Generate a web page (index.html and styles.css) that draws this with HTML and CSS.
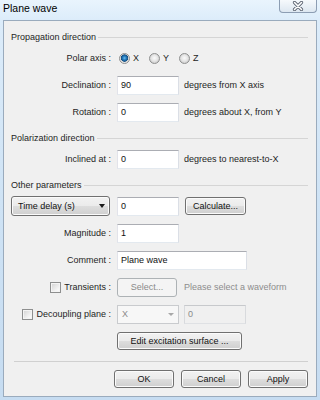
FILE: index.html
```html
<!DOCTYPE html>
<html>
<head>
<meta charset="utf-8">
<title>Plane wave</title>
<link rel="stylesheet" href="styles.css">
</head>
<body>
<div class="window">
  <div class="titlebar">
    <span class="title">Plane wave</span>
    <div class="close">
      <svg width="12" height="10" viewBox="0 0 12 10">
        <path d="M2.5 1.5 L9.5 8.5 M9.5 1.5 L2.5 8.5" stroke="#5a6270" stroke-width="3.2" stroke-linecap="round"/>
        <path d="M2.5 1.5 L9.5 8.5 M9.5 1.5 L2.5 8.5" stroke="#ffffff" stroke-width="1.6" stroke-linecap="round"/>
      </svg>
    </div>
  </div>
  <div class="client">
    <div class="group-title"><span>Propagation direction</span></div>
    <div class="row">
      <span class="lbl">Polar axis :</span>
      <div class="radios">
        <span class="radio-item"><span class="radio checked"></span>X</span>
        <span class="radio-item"><span class="radio"></span>Y</span>
        <span class="radio-item"><span class="radio"></span>Z</span>
      </div>
    </div>
    <div class="row">
      <span class="lbl">Declination :</span>
      <span class="input w62">90</span>
      <span class="suffix">degrees from X axis</span>
    </div>
    <div class="row">
      <span class="lbl">Rotation :</span>
      <span class="input w62">0</span>
      <span class="suffix">degrees about X, from Y</span>
    </div>

    <div class="group-title"><span>Polarization direction</span></div>
    <div class="row">
      <span class="lbl">Inclined at :</span>
      <span class="input w62">0</span>
      <span class="suffix">degrees to nearest-to-X</span>
    </div>

    <div class="group-title"><span>Other parameters</span></div>
    <div class="row">
      <span class="lbl lbl-left">
        <span class="combo">Time delay (s)<span class="arrow"></span></span>
      </span>
      <span class="input w62">0</span>
      <span class="btn btn-calc">Calculate...</span>
    </div>
    <div class="row">
      <span class="lbl">Magnitude :</span>
      <span class="input w62">1</span>
    </div>
    <div class="row">
      <span class="lbl">Comment :</span>
      <span class="input w130">Plane wave</span>
    </div>
    <div class="row">
      <span class="lbl"><span class="check"></span>Transients :</span>
      <span class="btn disabled btn-select">Select...</span>
      <span class="suffix muted">Please select a waveform</span>
    </div>
    <div class="row">
      <span class="lbl"><span class="check"></span>Decoupling plane :</span>
      <span class="dcombo">X<span class="darrow"></span></span>
      <span class="input disabled w62 gap5">0</span>
    </div>
    <div class="row">
      <span class="lbl"></span>
      <span class="btn btn-edit">Edit excitation surface ...</span>
    </div>

    <div class="sep"></div>
    <div class="buttons">
      <span class="btn">OK</span>
      <span class="btn">Cancel</span>
      <span class="btn">Apply</span>
    </div>
  </div>
</div>
</body>
</html>
```

FILE: styles.css
```css
* { box-sizing: border-box; }
html, body { margin: 0; padding: 0; }
body {
  width: 320px;
  height: 400px;
  overflow: hidden;
  font-family: "Liberation Sans", Arial, sans-serif;
  font-size: 9px;
  color: #1e1e1e;
}
.window {
  width: 320px;
  height: 400px;
  display: flex;
  flex-direction: column;
  background: linear-gradient(180deg, #e9f4fd 0px, #dcecfa 20px, #cfe3f5 200px, #c6dcf1 400px);
}
.titlebar {
  height: 20px;
  display: flex;
  align-items: flex-start;
  padding-left: 3px;
}
.title {
  font-size: 10.5px;
  line-height: 17px;
  color: #000;
}
.close {
  margin-left: auto;
  margin-right: 3px;
  width: 38px;
  height: 13px;
  border: 1px solid #8c9db3;
  border-top: none;
  border-radius: 0 0 4px 4px;
  background: linear-gradient(180deg, #f6f9fc, #dde7f1);
  display: flex;
  align-items: center;
  justify-content: center;
}
.close svg { display: block; }
.client {
  flex: 1;
  margin: 0 3px 3px 3px;
  border: 1px solid #9aabbd;
  background: #f0f0f0;
  padding: 9px 8px 0 7px;
  display: flex;
  flex-direction: column;
}
.group-title {
  height: 14px;
  display: flex;
  align-items: center;
  gap: 2px;
  white-space: nowrap;
}
.group-title::after {
  content: "";
  flex: 1;
  height: 1px;
  background: #d5d5d5;
}
.row + .group-title { margin-top: 9px; }
.row {
  height: 20px;
  display: flex;
  align-items: center;
  margin-top: 7px;
  white-space: nowrap;
}
.group-title + .row { margin-top: 4px; }
.lbl {
  width: 102px;
  flex-shrink: 0;
  margin-right: 4px;
  display: flex;
  align-items: center;
  justify-content: flex-end;
  gap: 3px;
  padding-right: 2px;
}
.lbl-left { justify-content: flex-start; padding-right: 0; }
.radios {
  display: flex;
  margin-left: 2px;
}
.radio-item {
  width: 30px;
  display: flex;
  align-items: center;
  gap: 3px;
}
.radio {
  width: 11px;
  height: 11px;
  border-radius: 50%;
  border: 1px solid #8e8f8f;
  background: radial-gradient(circle at 50% 45%, #fbfbfb 0, #e6e6e6 3px, #cfcfcf 5px);
}
.radio.checked {
  background: radial-gradient(circle at 50% 45%, #6fc0f0 0, #2a83c6 1.6px, #124e82 3.4px, #d6d6d6 3.9px, #ededed 5px);
}
.check {
  width: 11px;
  height: 11px;
  border: 1px solid #8e8f8f;
  background: linear-gradient(135deg, #d2d2d2 0%, #f4f4f4 70%, #ffffff 100%);
  box-shadow: inset 0 0 0 1px #f4f4f4;
}
.input {
  height: 19px;
  border: 1px solid;
  border-color: #abadb3 #dbdfe6 #e3e9ef #e2e3ea;
  background: #fff;
  padding-left: 3px;
  display: flex;
  align-items: center;
  color: #111;
}
.input.disabled {
  background: #f0f0f0;
  border-color: #c7c9cc #d8dadd #dfe1e4 #d8dadd;
  color: #8a8a8a;
}
.w62 { width: 62px; }
.w130 { width: 130px; }
.gap5 { margin-left: 5px; }
.suffix { margin-left: 5px; }
.muted { color: #8d8d8d; margin-left: 7px; }
.btn {
  height: 18px;
  display: flex;
  align-items: center;
  justify-content: center;
  border: 1px solid #707070;
  border-radius: 3px;
  background: linear-gradient(180deg, #f2f2f2 0%, #ebebeb 48%, #dddddd 52%, #cfcfcf 100%);
  box-shadow: inset 0 0 0 1px #fbfbfb;
  color: #111;
}
.btn.disabled {
  border-color: #adb2b5;
  background: #f4f4f4;
  box-shadow: none;
  color: #8a8a8a;
  height: 19px;
}
.btn-calc { width: 61px; margin-left: 6px; }
.btn-select { width: 60px; }
.btn-edit { width: 125px; margin-left: 0; }
.combo {
  width: 99px;
  height: 20px;
  border: 1px solid #707070;
  border-radius: 3px;
  background: linear-gradient(180deg, #f2f2f2 0%, #ebebeb 48%, #dddddd 52%, #cfcfcf 100%);
  box-shadow: inset 0 0 0 1px #fbfbfb;
  display: flex;
  align-items: center;
  padding-left: 6px;
  color: #111;
  position: relative;
}
.arrow {
  margin-left: auto;
  margin-right: 4px;
  width: 0;
  height: 0;
  border-left: 3.5px solid transparent;
  border-right: 3.5px solid transparent;
  border-top: 4px solid #1a1a1a;
}
.dcombo {
  width: 62px;
  height: 19px;
  border: 1px solid #c9cbce;
  background: #f7f7f7;
  display: flex;
  align-items: center;
  padding-left: 4px;
  color: #8a8a8a;
}
.darrow {
  margin-left: auto;
  margin-right: 4px;
  width: 0;
  height: 0;
  border-left: 3px solid transparent;
  border-right: 3px solid transparent;
  border-top: 3.5px solid #a8a8a8;
}
.sep {
  height: 1px;
  background: #d0d0d0;
  margin: 10px 0 0 3px;
}
.buttons {
  margin-top: 8px;
  display: flex;
  justify-content: flex-end;
  gap: 7px;
}
.buttons .btn { width: 60px; }
```
